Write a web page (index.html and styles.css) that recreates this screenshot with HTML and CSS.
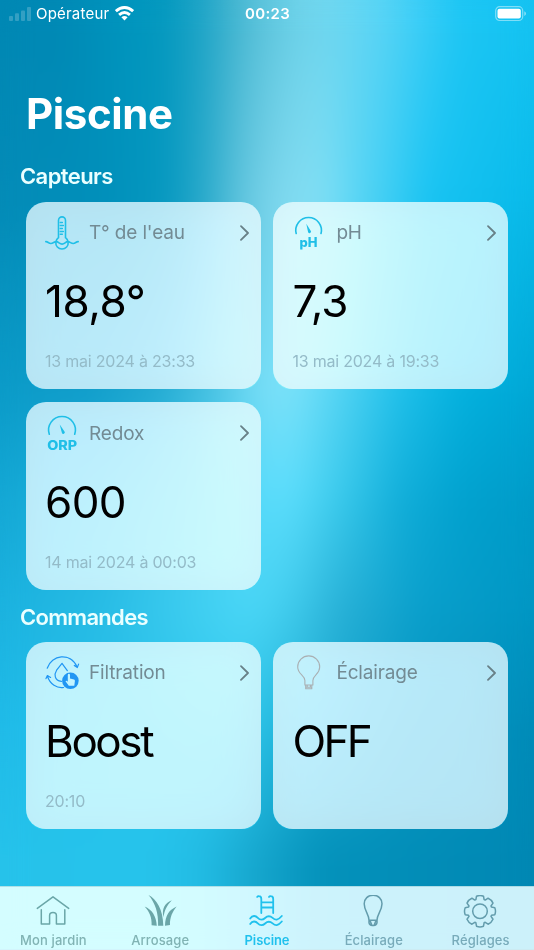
FILE: index.html
```html
<!DOCTYPE html>
<html lang="fr">
<head>
<meta charset="utf-8">
<title>Piscine</title>
<link rel="stylesheet" href="styles.css">
</head>
<body>
<div class="app">
  <div class="backdrop"><i class="b1"></i><i class="b2"></i><i class="b3"></i><i class="b4"></i><i class="b5"></i><i class="b6"></i><i class="b7"></i><i class="soften"></i></div>
  <header class="status">
    <div class="carrier">
      <svg class="signal" width="22" height="14" viewBox="0 0 22 14"><rect x="0" y="9" width="4" height="5" rx="1"/><rect x="6" y="6.3" width="4" height="7.7" rx="1"/><rect x="12" y="3.4" width="4" height="10.6" rx="1"/><rect x="18" y="0" width="4" height="14" rx="1"/></svg>
      <span class="operator">Opérateur</span>
      <svg class="wifi" width="19" height="15" viewBox="0 0 19 15"><g fill="none" stroke="#fff" stroke-width="2.9"><path d="M.9 5.200Q9.500-2.200 18.100 5.200"/><path d="M4.100 8.800Q9.500 4.100 14.900 8.800"/></g><path d="M6.400 11.300Q9.500 8.700 12.600 11.300L9.500 14.500Z" fill="#fff"/></svg>
    </div>
    <time class="clock">00:23</time>
    <svg class="battery" width="32" height="16" viewBox="0 0 32 16"><rect x=".7" y=".7" width="27" height="13.800" rx="4" fill="none" stroke="#fff" stroke-opacity=".45" stroke-width="1.200"/><rect x="2.500" y="2.700" width="23.300" height="9.800" rx="2" fill="#fff"/><path d="M29.300 5.300q1.700.6 1.700 2.300t-1.700 2.300z" fill="#fff" fill-opacity=".5"/></svg>
  </header>
  <main>
    <h1>Piscine</h1>
    <h2>Capteurs</h2>
    <section class="grid">
      <article class="card">
        <div class="head">
          <svg class="icon sensor" viewBox="0 0 34 34"><path d="M13.500 21.700V4.400a3.500 3.500 0 0 1 7 0v17.300a6.200 6.200 0 1 1-7 0z"/><path d="M15.300 6.500h2M15.300 9.500h3M15.300 12.500h2M15.300 15.500h3M15.300 18.300h2M.8 25.600c2-.2 2.800 1.900 5 1.900 2.400 0 3.200-1.900 5.500-1.900 2.200 0 3.300 2.500 5.800 2.500s3.400-2.500 5.600-2.500c2.400 0 3.200 1.900 5.500 1.900 2.200 0 3-2.100 5-1.900"/></svg>
          <h3>T° de l'eau</h3>
          <svg class="chev" viewBox="0 0 9 16"><path d="M1 1.100 8 8 1 14.900"/></svg>
        </div>
        <p class="value temp">18,8°</p>
        <p class="stamp">13 mai 2024 à 23:33</p>
      </article>
      <article class="card">
        <div class="head">
          <svg class="icon sensor" viewBox="0 0 34 34"><path class="dial" d="M4.200 17.500A12.800 12.800 0 1 1 29 17.500"/><path class="solid" d="M14.300 7.800 18.700 14.700a1.500 1.500 0 1 1-2.700 1.100z"/><text x="16.600" y="31.400" textLength="18" lengthAdjust="spacingAndGlyphs" font-size="12.500">pH</text></svg>
          <h3>pH</h3>
          <svg class="chev" viewBox="0 0 9 16"><path d="M1 1.100 8 8 1 14.900"/></svg>
        </div>
        <p class="value ph">7,3</p>
        <p class="stamp">13 mai 2024 à 19:33</p>
      </article>
      <article class="card">
        <div class="head">
          <svg class="icon sensor" viewBox="0 0 34 34"><path class="dial" d="M4.300 18.200A13.400 13.400 0 1 1 29.700 18.200"/><path class="solid" d="M14.700 8.500 19.500 15.500a1.500 1.500 0 1 1-2.700 1.100z"/><text x="17.200" y="33.500" textLength="30" lengthAdjust="spacingAndGlyphs" font-size="12.500">ORP</text></svg>
          <h3>Redox</h3>
          <svg class="chev" viewBox="0 0 9 16"><path d="M1 1.100 8 8 1 14.900"/></svg>
        </div>
        <p class="value redox">600</p>
        <p class="stamp">14 mai 2024 à 00:03</p>
      </article>
    </section>
    <h2 class="second">Commandes</h2>
    <section class="grid">
      <article class="card">
        <div class="head">
          <svg class="icon filter" viewBox="0 0 34 34"><path d="M2.200 12.200C6.500-1.400 25.500-4 32 10.800M29.300 9.500l3 2 1.300-3.400M1 22.600l1.400-3 3.200 1.800M2.400 20C5 28.500 12 32.500 18.600 31.500"/><path d="M16.400 25.400C9 24.400 9.200 18 11.600 14.200L17 7.300l5.300 7.400"/><circle cx="25.400" cy="24.800" r="8.300"/><path class="hand" d="M22.800 25.700v-6.600q0-1.300 1.100-1.300T25 19.100v3.500l4 .9q1 .3.900 1.400l-.6 4.900h-5.500l-3.300-4.500q.7-1.300 2.300.4z"/></svg>
          <h3>Filtration</h3>
          <svg class="chev" viewBox="0 0 9 16"><path d="M1 1.100 8 8 1 14.900"/></svg>
        </div>
        <p class="value boost">Boost</p>
        <p class="stamp">20:10</p>
      </article>
      <article class="card">
        <div class="head">
          <svg class="icon lamp" viewBox="0 0 34 34"><path d="M12.900 29v-4.500c0-5.500-7.200-6.200-7.200-13.600a11 11 0 0 1 22 0c0 7.400-6.800 8.100-6.800 13.600V29zM12.900 29h7.800M13.700 29v3.700h6.100V29M13.700 31.300h6.100M15.200 29v2.300M18.400 29v2.300"/></svg>
          <h3>Éclairage</h3>
          <svg class="chev" viewBox="0 0 9 16"><path d="M1 1.100 8 8 1 14.900"/></svg>
        </div>
        <p class="value off">OFF</p>
      </article>
    </section>
  </main>
  <nav>
    <a class="tab green"><svg viewBox="0 0 34 34"><path d="M1.300 13.400 17 1.800l15.700 11.600M5.300 14.700v14.200h8.300v-8.400q0-3 3.400-3t3.400 3v8.400h8.400V14.700"/></svg><span>Mon jardin</span></a>
    <a class="tab green grass"><svg viewBox="0 0 34 34"><path d="M5.500 0C13.500 4.200 20 14 20.300 30.800h-5.200C15.500 18 12.300 8 5.500 0z"/><path d="M1.600 11.500C9 14.500 13.200 21 13.800 30.800L8.600 30.200C9 22.500 6.500 16.800 1.600 11.500z"/><path d="M28.800 5.200C21.500 8.500 18.600 13.500 20.500 22.200 21.500 15 24 10.300 28.800 5.200z"/><path d="M33.600 11.600C26 15 22.300 20.500 22 30.800l5-.7C26.700 22.500 29.500 16.800 33.600 11.600z"/></svg><span>Arrosage</span></a>
    <a class="tab active"><svg viewBox="0 0 34 34"><path d="M8.200 1.900Q8.700 1.100 10 1.200 12.300 1.300 12.300 3.900V18M20 1.900Q20.500 1.100 21.800 1.200 24.200 1.300 24.200 3.900V18M12.300 7.300h11.900M12.300 12.500h11.900M1.200 23.500c2.200-3.300 5.400-3.100 7.600-.7s5 2.400 7.300.2 4.600-2.700 7.500-.1 5.200 2.700 9.200-1.900M1.200 29c2.200-3.300 5.400-3.100 7.600-.7s5 2.400 7.300.2 4.600-2.700 7.500-.1 5.200 2.700 9.200-1.900"/></svg><span>Piscine</span></a>
    <a class="tab blue"><svg viewBox="0 0 34 34"><path d="M13 25.200C13 19.500 8.200 15.500 8.200 8.800c0-5 3.800-8.600 8.900-8.600S26 3.800 26 8.800c0 6.700-5 10.700-5 16.400zM13 25.200v2.500q.4 2.800 3.300 2.800h1.400q2.900 0 3.300-2.800v-2.500M14.200 26l1.600 4M19.800 26l-1.600 4"/></svg><span>Éclairage</span></a>
    <a class="tab blue gear"><svg viewBox="0 0 34 34"><path d="M12.900 4.600 13.500 1.200q3.500-1.400 7 0L21.100 4.600 22.200 5.100 25.100 3.200q3.500 1.500 4.900 4.900L28 11l.5 1.100 3.300.6q1.400 3.500 0 7l-3.300.6L28 21.400l2 2.900q-1.400 3.400-4.900 4.900l-2.900-1.900-1.100.5-.6 3.400q-3.500 1.400-7 0l-.6-3.400-1.100-.5-2.900 1.900Q5.400 27.700 4 24.300l2-2.900-.5-1.100-3.300-.6q-1.400-3.500 0-7l3.300-.6L6 11 4 8.100Q5.400 4.700 8.900 3.200l2.900 1.900z"/><circle cx="17" cy="16.200" r="7.300"/></svg><span>Réglages</span></a>
  </nav>
</div>
</body>
</html>
```
FILE: styles.css
```css
* { box-sizing: border-box; }
body { margin: 0; font-family: Inter, "Liberation Sans", sans-serif; }
h1, h2, h3, p { margin: 0; }
svg { display: block; flex: none; }
.app { position: relative; isolation: isolate; width: 534px; height: 950px; display: flex; flex-direction: column; overflow: hidden; }

/* Horizontal gradients cross-faded from top to bottom */
.backdrop, .backdrop i { position: absolute; inset: 0; }
.backdrop { z-index: -1; }
.soften { backdrop-filter: blur(14px); }
.b1 { background: linear-gradient(90deg, #0088b4 0, #0089b5 60px, #0094bd 120px, #0499bf 165px, #22a6c8 205px, #43b5d0 233px, #5cc3db 260px, #6ed3ea 300px, #6fd7f0 330px, #58d4f5 380px, #3acdf6 420px, #1dc6f4 460px, #14c2f1 534px); }
.b2 { background: linear-gradient(90deg, #048bb7 0, #008fba 100px, #0698c0 165px, #2aaacb 205px, #62c5de 242px, #7fd8ee 280px, #82dff4 320px, #60d7f4 350px, #45cff3 380px, #18c3f2 430px, #09bae9 534px); mask-image: linear-gradient(transparent 30px, #000 200px); }
.b3 { background: linear-gradient(90deg, #0b9bc8 0, #129ecb 90px, #25acd3 160px, #50c7e6 220px, #76ddf6 260px, #7be2fa 290px, #52d3f3 340px, #20c0ea 400px, #04b1de 460px, #00a7d5 534px); mask-image: linear-gradient(transparent 200px, #000 390px); }
.b4 { background: linear-gradient(90deg, #14a7d4 0, #20b5df 100px, #3fcaed 200px, #59dcfb 265px, #5adcfb 290px, #40cdee 330px, #12aed9 400px, #02a2cf 460px, #009bc8 534px); mask-image: linear-gradient(transparent 390px, #000 500px); }
.b5 { background: linear-gradient(90deg, #1bb2df 0, #28bce5 100px, #40cff1 200px, #4ad6f6 250px, #40cbec 290px, #28b0d6 340px, #0a9fcb 420px, #0096c3 534px); mask-image: linear-gradient(transparent 500px, #000 610px); }
.b6 { background: linear-gradient(90deg, #20bbe8 0, #28c4ed 150px, #30c8ed 230px, #28bde2 265px, #1fb0d5 300px, #0898c3 400px, #008bb8 534px); mask-image: linear-gradient(transparent 610px, #000 730px); }
.b7 { background: linear-gradient(90deg, #26c2ea 0, #26c3eb 150px, #22bce4 200px, #15a5cc 260px, #0492bb 320px, #0087b3 534px); mask-image: linear-gradient(transparent 730px, #000 860px); }

.status { height: 28px; padding: 0 7px 0 9px; display: grid; grid-template-columns: 1fr auto 1fr; align-items: center; color: #fff; }
.carrier { display: flex; align-items: center; }
.signal { fill: #fff; fill-opacity: .2; margin-top: -1px; }
.operator { margin-left: 5px; font-size: 15px; line-height: 28px; letter-spacing: .2px; }
.wifi { margin-left: 6px; margin-top: -1px; }
.clock { font-size: 15px; font-weight: 600; letter-spacing: .3px; line-height: 28px; margin-left: -1px; }
.battery { justify-self: end; margin-top: -1px; }

main { flex: 1; padding: 60px 26px 0; }
h1 { color: #fff; font-size: 42px; line-height: 52px; font-weight: 700; letter-spacing: -.4px; }
h2 { margin: 20px 0 9.500px -6px; height: 32px; color: #eaffff; font-size: 22px; line-height: 32px; font-weight: 600; letter-spacing: -.6px; }
h2.second { margin: 11px 0 9px -6px; letter-spacing: -.7px; }
.grid { display: grid; grid-template-columns: 234.5px 234.5px; gap: 13px 12.9px; }
.card { height: 187.5px; padding: 14px 11.5px 0 19px; border-radius: 20px; background: rgba(238, 248, 253, .76); backdrop-filter: blur(20px) brightness(1.2); }
.head { display: flex; align-items: center; height: 34px; }
.icon { width: 34px; height: 34px; fill: none; stroke-linecap: round; stroke-linejoin: round; overflow: visible; }
.sensor { stroke: #20bfe7; stroke-width: 1.6; }
.sensor .solid { fill: #20bfe7; stroke: none; }
.sensor text { fill: #20bfe7; stroke: none; font-weight: 800; text-anchor: middle; }
.filter { stroke: #2196f3; stroke-width: 1.2; }
.filter circle { fill: #2196f3; stroke: none; }
.filter .hand { fill: #c3f4ff; stroke: none; }
.lamp { stroke: #aab0b3; stroke-width: 1.1; }
h3 { flex: 1; margin-left: 10px; padding-top: 1px; color: #738b94; font-size: 19px; line-height: 34px; font-weight: 400; letter-spacing: -.15px; }
.chev { width: 9px; height: 16px; fill: none; stroke: #688087; stroke-width: 1.8; stroke-linecap: round; stroke-linejoin: round; }
.value { height: 56px; margin-top: 23.500px; font-size: 44px; line-height: 56px; letter-spacing: -1px; color: #000; }
.temp { letter-spacing: -.4px; }
.redox { letter-spacing: -.6px; }
.boost { letter-spacing: -2.4px; }
.off { letter-spacing: -2.6px; }
.stamp { margin-top: 20px; font-size: 16px; line-height: 24px; letter-spacing: -.21px; color: #94bbc8; }

nav { height: 64px; border-top: 1px solid rgba(150, 205, 215, .6); background: rgba(245, 255, 255, .83); backdrop-filter: brightness(1.25); display: grid; grid-template-columns: repeat(5, 1fr); }
.tab { display: flex; flex-direction: column; align-items: center; padding-top: 8px; font-size: 13px; font-weight: 500; line-height: 18px; letter-spacing: .1px; color: #81b3b4; }
.tab svg { width: 34px; height: 34px; margin-left: -1px; fill: none; stroke: #6ba6a8; stroke-width: 1.5; stroke-linecap: round; stroke-linejoin: round; }
.tab span { margin-top: 2px; }
.tab.grass svg { fill: #6ba6a8; stroke: none; }
.tab.blue { color: #78abba; }
.tab.blue svg { stroke: #639cac; }
.tab.active { color: #20c1ed; font-weight: 600; letter-spacing: -.1px; }
.tab.active svg { stroke: #20c1ed; stroke-width: 1.8; }
```
